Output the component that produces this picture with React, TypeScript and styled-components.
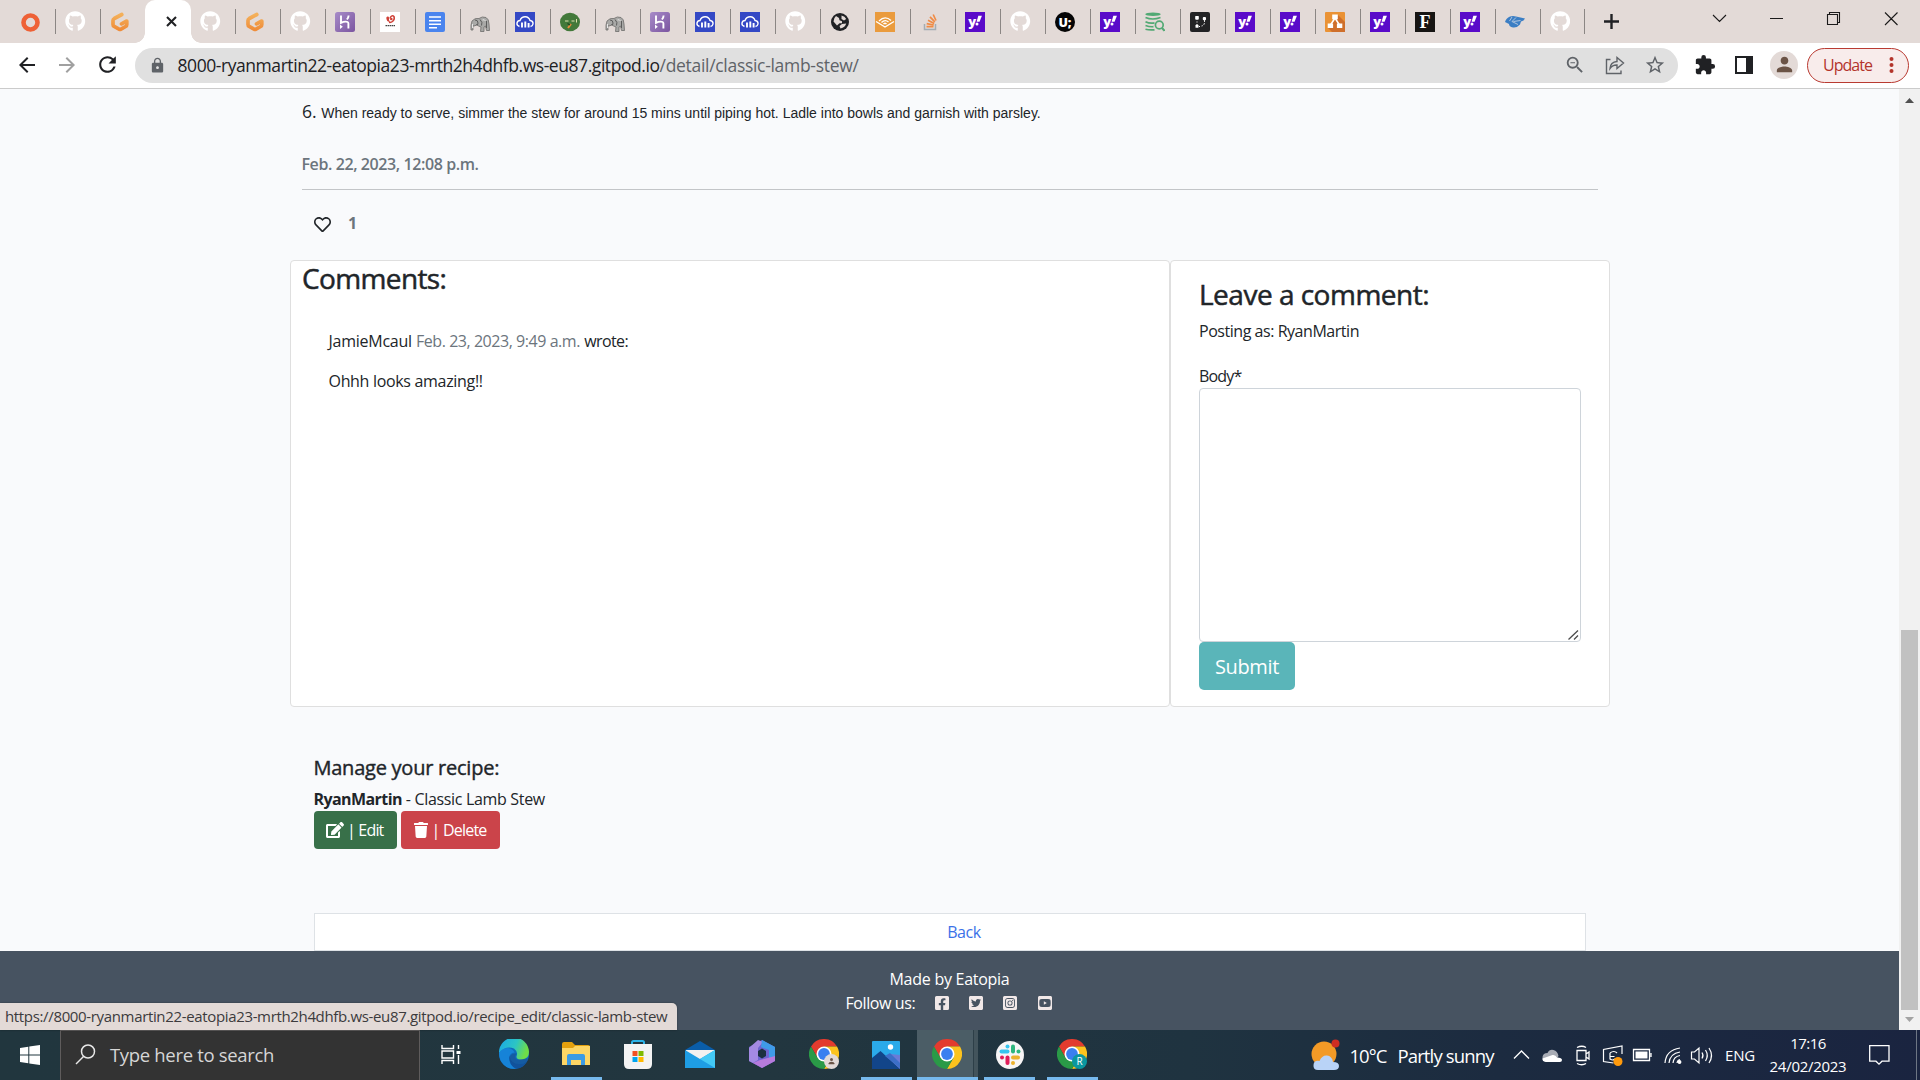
import React from "react";
import styled, { createGlobalStyle, css } from "styled-components";
import { FaGithub, FaRegHeart, FaEdit, FaTrash, FaFacebookSquare, FaTwitterSquare, FaInstagramSquare, FaYoutubeSquare } from "react-icons/fa";
import { MdExtension, MdStarBorder, MdPerson, MdLock, MdRefresh, MdArrowBack, MdArrowForward, MdZoomOut } from "react-icons/md";

/* Letter spacing per label, in px */
const tracking = {
  host: -0.438,
  path: -0.302,
  update: -0.97,
  date: -0.41,
  comments: -0.62,
  author: -0.25,
  when: -0.45,
  wrote: -0.6,
  ohhh: -0.32,
  leave: -0.5,
  posting: -0.46,
  body: -0.8,
  submit: -0.36,
  manage: -0.24,
  ryan: -0.58,
  stew: -0.32,
  edit: -0.811,
  del: -0.781,
  back: -0.4,
  made: -0.267,
  follow: -0.4,
  status: -0.345,
  search: -0.328,
  temp: -0.96,
  sunny: -0.84,
  eng: -0.178,
  time: -0.5,
  day: -0.28,
};

const Global = createGlobalStyle`
  * { box-sizing: border-box; }
  body { margin: 0; overflow: hidden; font-family: "Open Sans", "Noto Sans", sans-serif; color: #212529; }
  svg { display: block; flex: none; }
`;

const Screen = styled.div`
  width: 1920px;
  height: 1080px;
  display: flex;
  flex-direction: column;
  overflow: hidden;
`;
const Text = styled.span<{ $ls?: number }>`
  letter-spacing: ${(p) => p.$ls ?? 0}px;
  white-space: pre;
`;

/* Browser chrome */
const TabStrip = styled.div`
  height: 43px;
  flex: none;
  display: flex;
  background: #e3dad7;
  padding-left: 11px;
`;
const Tab = styled.div<{ $line?: boolean; $w?: number }>`
  width: ${(p) => p.$w ?? 45}px;
  height: 43px;
  flex: none;
  display: flex;
  align-items: center;
  justify-content: space-between;
  padding-left: 9px;
  &::after {
    content: "";
    width: 1px;
    height: 25px;
    background: ${(p) => (p.$line === false ? "transparent" : "#8b8684")};
  }
`;
const ActiveTab = styled.div`
  width: 46px;
  margin-left: -1px;
  flex: none;
  display: flex;
  align-items: center;
  justify-content: center;
  padding-left: 7px;
  position: relative;
  background: #fff;
  border-radius: 10px 10px 0 0;
  &::before, &::after {
    content: "";
    position: absolute;
    bottom: 0;
    width: 10px;
    height: 10px;
  }
  &::before { left: -10px; background: radial-gradient(circle at 0 0, transparent 9.5px, #fff 10px); }
  &::after { right: -10px; background: radial-gradient(circle at 100% 0, transparent 9.5px, #fff 10px); }
`;
const NewTab = styled.div`
  display: flex;
  align-items: center;
  margin-left: 19px;
`;
const WindowButtons = styled.div`
  margin-left: auto;
  padding: 9px 21px 0 0;
`;
const Toolbar = styled.div`
  height: 46px;
  flex: none;
  display: flex;
  align-items: center;
  background: #fff;
  border-bottom: 1px solid #cbcbcb;
  padding: 0 10px 2px 15px;
  color: #202124;
`;
const NavButtons = styled.div`
  display: flex;
  width: 120px;
  gap: 16px;
  align-items: center;
`;
const Omnibox = styled.div`
  width: 1543px;
  height: 35px;
  margin-top: 1px;
  border-radius: 18px;
  background: #e0e0e0;
  display: flex;
  align-items: center;
  padding: 0 12px 0 14px;
  font-size: 17.5px;
  line-height: 32px;
  color: #202124;
`;
const Path = styled(Text)` color: #5f6368; `;
const Lock = styled.div` color: #5f6368; width: 28.5px; `;
const OmniIcons = styled.div`
  margin-left: auto;
  display: flex;
  gap: 18px;
  align-items: center;
  color: #5f6368;
`;
const Extensions = styled.div`
  display: flex;
  align-items: center;
  margin-left: 16px;
`;
const SidePanel = styled.div` margin: 0 17px 0 19px; `;
const Avatar = styled.div`
  width: 28px;
  height: 28px;
  margin-right: 9px;
  border-radius: 50%;
  background: #e3dad7;
  color: #6b5446;
  display: flex;
  align-items: center;
  justify-content: center;
`;
const Update = styled.div`
  width: 102px;
  height: 35px;
  margin-top: 1px;
  border: 1.5px solid #b93a31;
  border-radius: 18px;
  background: #f8eceb;
  color: #b3342b;
  display: flex;
  align-items: center;
  justify-content: space-between;
  padding: 0 14px 1px 15px;
  font-size: 16px;
`;

/* Web page */
const Viewport = styled.div`
  height: 941px;
  flex: none;
  display: flex;
  position: relative;
`;
const Page = styled.main`
  width: 1899px;
  background: #f9fafc;
  display: flex;
  flex-direction: column;
  font-size: 16px;
  line-height: 24px;
`;
const Scrollbar = styled.div`
  width: 21px;
  background: #f1f1f1;
  display: flex;
  flex-direction: column;
  align-items: center;
  justify-content: space-between;
  padding: 9px 0 8px;
`;
const Thumb = styled.div`
  width: 17px;
  height: 380px;
  background: #c1c1c1;
  margin: 525px 0 5px;
`;
const Recipe = styled.section`
  width: 1296px;
  margin: 9px 0 0 302px;
`;
const Step = styled.div`
  height: 26px;
  line-height: 26px;
  font-size: 17.6px;
`;
const StepText = styled(Text)`
  font: 14px/26px "Liberation Sans", Arial, sans-serif;
  margin-left: 4.5px;
`;
const Posted = styled.div`
  margin-top: 28px;
  height: 38px;
  border-bottom: 1px solid #c3c5c8;
  color: #6c757d;
  font-weight: 600;
  line-height: 25px;
  text-indent: -0.5px;
`;
const Like = styled.div`
  margin: 21px 0 25px 12px;
  height: 24px;
  display: flex;
  align-items: center;
  gap: 17px;
  color: #6c757d;
  font-weight: 700;
  svg { color: #212529; margin-top: 3px; }
`;
const CardRow = styled.section`
  display: flex;
  margin-left: 290px;
  height: 447px;
`;
const Card = styled.div<{ $w: number; $pad: string }>`
  width: ${(p) => p.$w}px;
  background: #fff;
  border: 1px solid #dfdfdf;
  border-radius: 4px;
  padding: ${(p) => p.$pad};
`;
const Heading = styled.h3`
  margin: 0;
  font-size: 28px;
  line-height: 34px;
  font-weight: 400;
  -webkit-text-stroke: 0.5px #212529;
`;
const Comment = styled.article`
  margin: 34px 0 0 26.5px;
`;
const Muted = styled(Text)` color: #6c757d; `;
const Para = styled.p<{ $top?: number }>`
  margin: ${(p) => p.$top ?? 0}px 0 0;
  height: 24px;
`;
const Field = styled.div`
  position: relative;
  width: 382px;
  height: 254px;
  > svg { position: absolute; right: 2px; bottom: 2px; }
`;
const TextArea = styled.textarea`
  display: block;
  width: 382px;
  height: 254px;
  border: 1px solid #ced4da;
  border-radius: 4px;
  background: #fff;
  resize: none;
`;
const Submit = styled.button`
  width: 96px;
  height: 48px;
  padding: 0;
  border: 0;
  border-radius: 5px;
  background: #5ab5b9;
  color: #fff;
  font: 20px "Open Sans", sans-serif;
`;
const Manage = styled.section`
  margin: 49px 0 0 313.5px;
`;
const ManageTitle = styled.h5`
  margin: 0 0 7px;
  font-size: 20px;
  line-height: 24px;
  font-weight: 400;
  -webkit-text-stroke: 0.4px #212529;
`;
const Buttons = styled.div`
  display: flex;
  gap: 4px;
  margin-left: 0.5px;
`;
const Action = styled.button<{ $bg: string; $w: number; $gap: number }>`
  width: ${(p) => p.$w}px;
  height: 38px;
  padding: 0 0 0 12px;
  border: 0;
  border-radius: 4px;
  background: ${(p) => p.$bg};
  color: #fff;
  display: flex;
  align-items: center;
  gap: ${(p) => p.$gap}px;
  font: 16px/24px "Open Sans", sans-serif;
`;
const Back = styled.div`
  width: 1272px;
  height: 38px;
  margin: 64px 0 0 314px;
  border: 1px solid #dee2e6;
  background: #fff;
  padding-left: 28px;
  line-height: 37px;
  text-align: center;
  color: #3b71e8;
`;
const Footer = styled.footer`
  flex: 1;
  background: #475361;
  color: #fff;
  padding-top: 16px;
  display: flex;
  flex-direction: column;
  align-items: center;
`;
const Social = styled.div`
  display: flex;
  align-items: center;
  height: 24px;
  width: 209px;
  margin-left: 1px;
  gap: 18.4px;
  svg { color: #f1e8e8; }
`;
const StatusBubble = styled.div`
  position: absolute;
  left: 0;
  bottom: 0;
  width: 677px;
  height: 27px;
  background: #e3dad7;
  border-top-right-radius: 5px;
  padding-left: 5px;
  font-size: 15px;
  line-height: 26px;
  color: #3c3b3d;
  box-shadow: 0 0 2px rgba(0, 0, 0, 0.4);
`;

/* Taskbar */
const Taskbar = styled.div`
  height: 50px;
  display: flex;
  background: linear-gradient(90deg, #21363e 0%, #22363f 40%, #1f3340 62%, #1c2b40 78%, #1a2440 100%);
  color: #fff;
`;
const Start = styled.div`
  width: 60px;
  display: flex;
  align-items: center;
  justify-content: center;
`;
const SearchBox = styled.div`
  width: 360px;
  background: #333;
  border: 1px solid #5f5c5c;
  border-bottom: 0;
  display: flex;
  align-items: center;
  gap: 14px;
  padding: 0 0 2px 14px;
  font-size: 18.5px;
  color: #d6d6d6;
`;
const TaskIcon = styled.div<{ $mode?: "open" | "active"; $w?: number }>`
  width: ${(p) => p.$w ?? 62}px;
  flex: none;
  display: flex;
  flex-direction: column;
  align-items: center;
  justify-content: space-between;
  padding-top: 9px;
  ${(p) => p.$mode === "active" && css`background: linear-gradient(90deg, #4b5d66 56px, #2d3f48 56px, #2d3f48 57px, #43545c 57px);`}
  &::after {
    content: "";
    height: 3px;
    width: ${(p) => (p.$mode === "active" ? "100%" : "51px")};
    background: ${(p) => (p.$mode ? "#76b9ed" : "transparent")};
  }
`;
const IconShift = styled.div<{ $x: number }>` padding-right: ${(p) => p.$x}px; `;
const Tray = styled.div`
  margin-left: auto;
  display: flex;
  align-items: center;
  width: 609px;
  font-size: 15px;
`;
const Weather = styled.div`
  display: flex;
  align-items: center;
  font-size: 18.5px;
  width: 201px;
`;
const Temp = styled(Text)` margin: 0 11px 0 8.5px; `;
const TrayIcons = styled.div`
  display: flex;
  align-items: center;
  width: 213px;
`;
const Lang = styled(Text)` width: 38px; `;
const Clock = styled.div`
  width: 90px;
  display: flex;
  flex-direction: column;
  align-items: center;
  line-height: 23.5px;
`;
const Notify = styled.div`
  margin-left: 16px;
  width: 47px;
`;
const ShowDesktop = styled.div`
  width: 1px;
  height: 50px;
  background: #6d7684;
`;

type LetterProps = { bg: string; round?: boolean; size: number; family: string; y: number; children: string };
const Letter = ({ bg, round, size, family, y, children }: LetterProps) => (
  <svg width="20" height="20">
    {round ? <circle cx="10" cy="10" r="10" fill={bg} /> : <rect width="20" height="20" fill={bg} />}
    <text x="10" y={y} fill="#fff" textAnchor="middle" fontSize={size} fontWeight="800" fontFamily={family}>{children}</text>
  </svg>
);
const Origin = () => <svg width="20" height="20"><circle cx="10.5" cy="10.5" r="7" fill="none" stroke="#ee6136" strokeWidth="4.6" /></svg>;
const Github = () => <FaGithub size={20.5} color="#fff" />;
const Gitpod = () => (
  <svg width="20" height="20">
    <defs><linearGradient id="gp" x1="0" y1="0" x2="0" y2="1"><stop offset="0" stopColor="#f4b05a" /><stop offset="1" stopColor="#ef8d3a" /></linearGradient></defs>
    <path d="M11.8 2.500L4.300 6.500Q3 7.300 3 8.600v3.800q0 1.300 1.200 2L9 17.200q1 .6 2 0l4.600-2.700q1.200-.7 1.200-2V9l-5.300 2.800" fill="none" stroke="url(#gp)" strokeWidth="3.700" strokeLinecap="round" strokeLinejoin="round" />
  </svg>
);
const Heroku = () => (
  <svg width="20" height="20">
    <defs><linearGradient id="hk" x1="0" y1="0" x2="1" y2="1"><stop offset="0" stopColor="#a78bc8" /><stop offset="1" stopColor="#7b55a0" /></linearGradient></defs>
    <rect width="20" height="20" rx="2.5" fill="url(#hk)" />
    <path d="M6 3.500v7.300c2.500-1.200 7.400-2 7.400.6v5.200M13.600 3.500c0 1.600-.7 2.800-1.700 4" fill="none" stroke="#fff" strokeWidth="1.900" />
    <path d="M5 12.500l2.800 2.200L5 17z" fill="#fff" />
  </svg>
);
const Recipes = () => (
  <svg width="20" height="20">
    <rect width="20" height="20" fill="#fff" />
    <path d="M6.300 6q0-2 2-1.500l1.200 1.700q-1.500 2 .8 3.300-3.600 1-4-3.500z" fill="#cf4036" />
    <path d="M10 6q2-3.500 4-1.500 1 3-1.500 5-1.500 1.200-3.500.8" fill="none" stroke="#cf4036" strokeWidth="1.500" />
    <circle cx="11.300" cy="7" r="1.300" fill="#cf4036" />
    <path d="M5.500 13.600h9.500" stroke="#444" strokeWidth="1.300" strokeDasharray="1.500 .5" />
  </svg>
);
const Docs = () => <svg width="20" height="20"><rect width="20" height="20" rx="2" fill="#4a84ee" /><path d="M4 5h12M4 8.700h12M4 12.300h12M4 15.800h8" stroke="#fff" strokeWidth="1.600" /></svg>;
const Elephant = () => (
  <svg width="20" height="20">
    <path d="M1 18Q.5 13 2 9Q5 5.500 9 6.500Q12 4 16 5.500Q19 7 19 12L19.500 18.500H16.500L15.500 14L14 15V19.500H10.500L11 15Q8 14 6.500 12.500Q5 15 3.500 13.500Q2.500 15 3 18z" fill="#a9a9a7" stroke="#6d6c6b" strokeWidth=".8" />
    <path d="M5 8q3 0 3 3t-2 2M10 7.500q3 3 1.500 6M16.500 9v7" fill="none" stroke="#5c5c5c" strokeWidth="1" />
    <path d="M12.500 8q2-1 3 1M2.500 12v4" stroke="#e6e6e6" fill="none" />
  </svg>
);
const Cloudinary = () => (
  <svg width="20" height="20"><rect width="20" height="20" fill="#3448c5" /><path d="M4.500 14.500Q1.500 13.500 2 11Q2.500 8.600 5 8.500Q6.500 4.700 10.300 4.800Q14 5 15 8.500Q18.300 9 18 12Q17.700 14 15.500 14.500" fill="none" stroke="#fff" strokeWidth="1.400" /><path d="M7 10.500v5M10.300 9.500v6M13.600 11v4.500" stroke="#fff" strokeWidth="1.900" /></svg>
);
const Green = () => <svg width="20" height="20"><ellipse cx="10" cy="10" rx="10" ry="9.300" fill="#43793a" /><path d="M5 9h3.500M11.500 9h3M16.500 7v3.500" stroke="#dfe3b0" strokeWidth="1" /><path d="M11 12l-3 4" stroke="#e88a3c" strokeWidth="2" /><path d="M7.500 11.500l2.500 1.500" stroke="#1d4420" strokeWidth="1.300" /></svg>;
const Globe = () => <svg width="20" height="20"><circle cx="10" cy="10" r="9" fill="#202124" /><path d="M3.500 9.500Q3.500 6 6 4l3 2 .5 2.200 2.500 1v2H9.500L7 13.500 3.500 9.500zM11.500 3.500q3.500.7 4.700 3.500l-2.200 1.500-2.500-1.500zM10.500 16.500l-1-2.500 2.500-2 4.200-.5q-1 4-5.700 5z" fill="#e3dad7" /></svg>;
const Audible = () => <svg width="20" height="20"><rect width="20" height="20" fill="#ea9b3d" /><path d="M1 9.500l9 5.500 9-5.500M4 9q6-6 12-.5M6.500 10.500Q10 7 13.500 10M8.500 12q1.500-1.500 3 0" fill="none" stroke="#fff" strokeWidth="1.400" /></svg>;
const Stack = () => <svg width="20" height="20" fill="none"><path d="M4.500 12v5.500h11V12" stroke="#a4adb3" strokeWidth="1.500" /><path d="M6.500 14.700h7M6.700 11.700l7 1.300M8 8.200l6.200 3.200M10 4.800l4.800 5M13.200 2.500l2.800 6" stroke="#f08b45" strokeWidth="1.700" /></svg>;
const Sql = () => <svg width="20" height="20" fill="none" stroke="#52a974"><ellipse cx="8" cy="2.300" rx="7.700" ry="1.700" fill="#52a974" stroke="none" /><path d="M.5 5.500q7 3 15 0M.5 9.700q4 2 9 1.200M.5 13.500q4 1.500 8 1.200M.5 17.300q4 1 9 .5" strokeWidth="1.700" /><circle cx="14.300" cy="13" r="3.900" strokeWidth="1.700" /><path d="M17 16l2.500 2.800" strokeWidth="2" /></svg>;
const Flow = () => (
  <svg width="20" height="20">
    <rect width="20" height="20" rx="2" fill="#232325" />
    <path d="M7 7v7M9 14.500h2" stroke="#fff" strokeDasharray="1 1.500" />
    <path d="M14.500 8v2q0 3.500-3 4" fill="none" stroke="#ddd" strokeDasharray="2 1" />
    <rect x="5.200" y="4" width="3.600" height="3.600" rx=".6" fill="#fff" /><rect x="5.500" y="12.800" width="3" height="3" rx=".6" fill="#fff" /><rect x="12.800" y="5" width="3.200" height="3.200" rx="1" fill="#fff" />
  </svg>
);
const Drawio = () => <svg width="20" height="20"><rect width="20" height="20" rx="1" fill="#ea9235" /><path d="M13 3l7 7v10H7l-4-4 7-8z" fill="#cf6f2b" /><path d="M10 6L5.500 13M10 6l4.500 7" stroke="#fff" strokeWidth="1.500" /><path d="M7.200 2.500h5.600V7.300H7.200z" fill="#fff" /><path d="M2.700 11.500h5.400V16H2.700z" fill="#fff" /><path d="M11.900 11.500h5.400V16h-5.400z" fill="#fff" /></svg>;
const Planet = () => <svg width="20" height="20"><path d="M0 10Q1 6 5 4.500Q8 3.500 11 4.500L20 6.500L18.500 8.500L16 9.500L15 12.500Q12 16 8 15.500Q4 14.500 4 12z" fill="#3b7ec4" /><path d="M7 5L4.500 9M11 5.500L7 9.500l6 3M8.500 9.500l7-1" stroke="#dfe3ea" strokeWidth=".7" fill="none" /></svg>;
const Yahoo = () => (
  <svg width="20" height="20"><rect width="20" height="20" fill="#5a0bc9" /><text x="7.300" y="13.600" fill="#fff" textAnchor="middle" fontSize="13" fontWeight="800" fontFamily="Open Sans">y</text><path d="M13.300 3.700h3.600l-2.300 6h-3z" fill="#fff" /><circle cx="12" cy="12" r="1.500" fill="#fff" /></svg>
);
const Uxd = () => <Letter bg="#050505" round size={12.500} y={14.500} family="Open Sans">U;</Letter>;
const Fandom = () => <Letter bg="#171513" size={18} y={15.700} family="Liberation Serif">F</Letter>;

const before = [Origin, Github, Gitpod];
const after = [Github, Gitpod, Github, Heroku, Recipes, Docs, Elephant, Cloudinary, Green, Elephant, Heroku, Cloudinary, Cloudinary, Github, Globe, Audible, Stack, Yahoo, Github, Uxd, Yahoo, Sql, Flow, Yahoo, Yahoo, Drawio, Yahoo, Fandom, Yahoo, Planet, Github];

const Chrome = ({ badge }: { badge?: "person" | "R" }) => (
  <svg width="30" height="30" viewBox="0 0 30 30">
    <path d="M2 7.500A15 15 0 0 1 28 7.500H15L8.500 18.700z" fill="#e33b2e" />
    <path d="M28 7.500A15 15 0 0 1 15 30L21.500 18.700 15 7.500z" fill="#fcc31e" />
    <path d="M2 7.500A15 15 0 0 0 15 30L21.500 18.700H8.500z" fill="#2a9a47" />
    <circle cx="15" cy="15" r="7.500" fill="#fff" /><circle cx="15" cy="15" r="5.900" fill="#3a7ff0" />
    {badge === "person" && <g><circle cx="22.500" cy="22.500" r="7.500" fill="#e3dad7" /><circle cx="22.500" cy="20.500" r="1.500" fill="#6b5446" /><path d="M19.700 25.300v-1q0-1.500 2.800-1.500t2.800 1.500v1z" fill="#6b5446" /></g>}
    {badge === "R" && <g><circle cx="22.500" cy="22.500" r="7.500" fill="#0b97a0" /><text x="22.500" y="26.300" fontSize="10" fill="#fff" textAnchor="middle" fontFamily="Open Sans">R</text></g>}
  </svg>
);

export default function App() {
  return (
    <Screen>
      <Global />
      <TabStrip>
        {before.map((Icon, i) => <Tab key={i} $line={i < 2}><Icon /></Tab>)}
        <ActiveTab><svg width="11" height="11"><path d="M1 1l9 9M10 1l-9 9" stroke="#202124" strokeWidth="2.100" /></svg></ActiveTab>
        {after.map((Icon, i) => <Tab key={i} $w={i > 28 ? 44.5 : 45}><Icon /></Tab>)}
        <NewTab><svg width="15" height="15"><path d="M0 7.500h15M7.500 0v15" stroke="#202124" strokeWidth="2.400" /></svg></NewTab>
        <WindowButtons>
          <svg width="188" height="20" fill="none" stroke="#1b1a1a" strokeWidth="1.100">
            <path d="M2 6l6.500 6.500L15 6M59 9.500h13M116.500 5.500h10v10h-10zM118.500 5.500v-2h10v10h-2M174 3.500l12.500 12.500M186.500 3.500L174 16" />
          </svg>
        </WindowButtons>
      </TabStrip>
      <Toolbar>
        <NavButtons>
          <MdArrowBack size={24} /><MdArrowForward size={24} color="#a0a0a0" /><MdRefresh size={25} />
        </NavButtons>
        <Omnibox>
          <Lock><MdLock size={17} /></Lock>
          <Text $ls={tracking.host}>8000-ryanmartin22-eatopia23-mrth2h4dhfb.ws-eu87.gitpod.io</Text>
          <Path $ls={tracking.path}>/detail/classic-lamb-stew/</Path>
          <OmniIcons>
            <MdZoomOut size={22} />
            <svg width="22" height="22" viewBox="0 0 22 22" fill="none" stroke="#5f6368" strokeWidth="1.400"><path d="M6.500 5.500H2.500v14h14.500v-3M6 14.500q.5-6.500 7-7V3.500l6.500 5.500-6.500 5.500V11q-4.500-.2-7 3.500z" /></svg>
            <MdStarBorder size={22} />
          </OmniIcons>
        </Omnibox>
        <Extensions>
          <MdExtension size={22} />
          <SidePanel><svg width="18" height="18"><path d="M0 0h18v18H0zM2 2v14h9V2z" fill="#202124" fillRule="evenodd" /></svg></SidePanel>
          <Avatar><MdPerson size={23} /></Avatar>
          <Update>
            <Text $ls={tracking.update}>Update</Text>
            <svg width="5" height="18" fill="#b3342b"><circle cx="2.500" cy="3" r="2" /><circle cx="2.500" cy="9" r="2" /><circle cx="2.500" cy="15" r="2" /></svg>
          </Update>
        </Extensions>
      </Toolbar>

      <Viewport>
        <Page>
          <Recipe>
            <Step>6.<StepText>When ready to serve, simmer the stew for around 15 mins until piping hot. Ladle into bowls and garnish with parsley.</StepText></Step>
            <Posted><Text $ls={tracking.date}>Feb. 22, 2023, 12:08 p.m.</Text></Posted>
            <Like><FaRegHeart size={17} />1</Like>
          </Recipe>
          <CardRow>
            <Card $w={880} $pad="0 0 0 11px">
              <Heading><Text $ls={tracking.comments}>Comments:</Text></Heading>
              <Comment>
                <Para><Text $ls={tracking.author}>JamieMcaul</Text> <Muted $ls={tracking.when}>Feb. 23, 2023, 9:49 a.m.</Muted> <Text $ls={tracking.wrote}>wrote:</Text></Para>
                <Para $top={16}><Text $ls={tracking.ohhh}>Ohhh looks amazing!!</Text></Para>
              </Comment>
            </Card>
            <Card $w={440} $pad="16px 0 0 28px">
              <Heading><Text $ls={tracking.leave}>Leave a comment:</Text></Heading>
              <Para $top={8}><Text $ls={tracking.posting}>Posting as: RyanMartin</Text></Para>
              <Para $top={21}><Text $ls={tracking.body}>Body*</Text></Para>
              <Field>
                <TextArea />
                <svg width="11" height="10"><path d="M.5 9.500L10 .5M6 9.500L10 5.500" stroke="#4c4c4c" strokeWidth="1.300" /></svg>
              </Field>
              <Submit><Text $ls={tracking.submit}>Submit</Text></Submit>
            </Card>
          </CardRow>
          <Manage>
            <ManageTitle><Text $ls={tracking.manage}>Manage your recipe:</Text></ManageTitle>
            <Para><Text as="strong" $ls={tracking.ryan}>RyanMartin</Text><Text $ls={tracking.stew}> - Classic Lamb Stew</Text></Para>
            <Buttons>
              <Action $bg="#387049" $w={83} $gap={3}><FaEdit size={18} /><Text $ls={tracking.edit}>| Edit</Text></Action>
              <Action $bg="#cb444a" $w={99} $gap={2.500}><FaTrash size={16} /><Text $ls={tracking.del}>| Delete</Text></Action>
            </Buttons>
          </Manage>
          <Back><Text $ls={tracking.back}>Back</Text></Back>
          <Footer>
            <Text $ls={tracking.made}>Made by Eatopia</Text>
            <Social>
              <Text $ls={tracking.follow}>Follow us:</Text>
              <FaFacebookSquare size={16} /><FaTwitterSquare size={16} /><FaInstagramSquare size={16} /><FaYoutubeSquare size={16} />
            </Social>
          </Footer>
        </Page>
        <Scrollbar>
          <svg width="9" height="5"><path d="M0 5l4.500-5L9 5z" fill="#505050" /></svg>
          <Thumb />
          <svg width="9" height="5"><path d="M0 0h9L4.500 5z" fill="#a3a3a3" /></svg>
        </Scrollbar>
        <StatusBubble><Text $ls={tracking.status}>https://8000-ryanmartin22-eatopia23-mrth2h4dhfb.ws-eu87.gitpod.io/recipe_edit/classic-lamb-stew</Text></StatusBubble>
      </Viewport>

      <Taskbar>
        <Start><svg width="20" height="20" fill="#fff"><path d="M0 3l8.300-1.200v7.700H0zM9.300 1.600L20 0v9.500H9.300zM0 10.500h8.300v7.700L0 17zM9.300 10.500H20V20L9.300 18.400z" /></svg></Start>
        <SearchBox>
          <svg width="21" height="21" fill="none" stroke="#e8e8e8" strokeWidth="1.500"><circle cx="13" cy="7.500" r="6.500" /><path d="M8.500 12.500L1 20" /></svg>
          <Text $ls={tracking.search}>Type here to search</Text>
        </SearchBox>
        <TaskIcon $w={63}>
          <IconShift $x={2}><svg width="20" height="30" fill="none" stroke="#fff" strokeWidth="1.400"><path d="M1 6v3.500h11.500V6M1 25v-3.500h11.500V25M1 12h11.500v7H1zM17.500 6v4M17.500 16v9" /><path d="M15.500 12h4v3h-4z" fill="#fff" stroke="none" /></svg></IconShift>
        </TaskIcon>
        <TaskIcon>
          <svg width="30" height="30">
            <defs><linearGradient id="ed" x1="0" y1="0" x2="1" y2=".3"><stop offset="0" stopColor="#1aa7e8" /><stop offset=".6" stopColor="#2cc5c4" /><stop offset="1" stopColor="#6fdd48" /></linearGradient></defs>
            <circle cx="15" cy="15" r="15" fill="#0f6cbd" />
            <path d="M0 14A15 15 0 0 1 30 13Q30 20 23 20.500Q17 20.500 17.500 17.500Q19.500 13 15 9.500Q7 6 0 14z" fill="url(#ed)" />
            <path d="M0 14Q3 9 9 9Q14 9.500 15.500 13.500Q10 14 10 20Q11 27 18 29.500Q10 31 5 26Q0 21 0 14z" fill="#1683d8" />
            <path d="M10.500 17Q12 25 20 25Q25 25 28 22.500Q24 29.500 17 29.800Q9.500 26 10.500 17z" fill="#11529c" />
            <path d="M28 22.500Q31 19 27 19.500Q22 21 17.500 20.500Q15 18 17.500 14.500Q11 14 10.700 19Q13 25.500 20 25Q25 25 28 22.500z" fill="#1b4f8c" opacity=".55" />
          </svg>
        </TaskIcon>
        <TaskIcon $mode="open">
          <svg width="28" height="30"><path d="M0 5q0-2 2-2h8l3 3h13q2 0 2 2v17H0z" fill="#e4a10e" /><path d="M0 9h11l2-2h15v19H0z" fill="#fdd665" /><path d="M5 26V17q0-2 2-2h14q2 0 2 2v9h-4v-5H9v5z" fill="#3c9be4" /></svg>
        </TaskIcon>
        <TaskIcon>
          <svg width="28" height="30"><path d="M8 6V3.500q0-1.500 1.500-1.500h9q1.500 0 1.500 1.500V6" fill="none" stroke="#2cb3e8" strokeWidth="2" /><path d="M0 5h28v20q0 5-5 5H5q-5 0-5-5z" fill="#f3f3f3" /><path d="M8.500 12h5v5h-5z" fill="#f25022" /><path d="M14.500 12h5v5h-5z" fill="#7fba00" /><path d="M8.500 18h5v5h-5z" fill="#00a4ef" /><path d="M14.500 18h5v5h-5z" fill="#ffb900" /></svg>
        </TaskIcon>
        <TaskIcon>
          <svg width="30" height="30"><path d="M0 11L15 2l15 9z" fill="#0a5da8" /><path d="M1 11h28v9H1z" fill="#f3f1f0" /><path d="M0 11l15 9L30 11v18H0z" fill="#1e9de4" /><path d="M15 20l15-9v18z" fill="#43c9f5" /><path d="M3 11h24l-12 8z" fill="#f3f1f0" /></svg>
        </TaskIcon>
        <TaskIcon>
          <svg width="26" height="30"><path d="M13 1L26 8v14l-13 7L0 22V8z" fill="#6d64cf" /><path d="M0 9l9-8 5 2-5 6v12l-5 3-4-2z" fill="#a48ae3" /><path d="M13 1l13 7v14l-6-1V11l-8-3z" fill="#3f9be8" /><path d="M26 17v5l-13 7-9-5 7-3 4-1z" fill="#b77bdc" /><path d="M13 9.500l4 2.500v5l-4 2.500-4-2.500v-5z" fill="#1b3040" /></svg>
        </TaskIcon>
        <TaskIcon><Chrome badge="person" /></TaskIcon>
        <TaskIcon $mode="open">
          <svg width="28" height="30"><rect y="2" width="28" height="28" rx="1" fill="#2baaea" /><path d="M28 16v14H12l6-15z" fill="#6a7bd6" /><path d="M0 19L8.500 12 28 30H0z" fill="#124589" /><path d="M13 17l5-3 10 10v5z" fill="#3c6fc8" /><circle cx="18.500" cy="8" r="2.700" fill="#fff" /></svg>
        </TaskIcon>
        <TaskIcon $mode="active" $w={61}><IconShift $x={1}><Chrome /></IconShift></TaskIcon>
        <TaskIcon $mode="open" $w={63}>
          <svg width="28" height="30"><circle cx="14" cy="16" r="14" fill="#f7f5f6" /><g strokeWidth="4" strokeLinecap="round"><path d="M5.500 12.500h6" stroke="#36c5f0" /><path d="M17 7.500v5" stroke="#2eb67d" /><path d="M17 18.500h5" stroke="#ecb22e" /><path d="M11.500 18.500v5.500" stroke="#e01e5a" /><path d="M11.500 7.500h.01" stroke="#36c5f0" /><path d="M22.500 12.500h.01" stroke="#2eb67d" /><path d="M17 24h.01" stroke="#ecb22e" /><path d="M6 18.500h.01" stroke="#e01e5a" /></g></svg>
        </TaskIcon>
        <TaskIcon $mode="open"><Chrome badge="R" /></TaskIcon>
        <Tray>
          <Weather>
            <svg width="30" height="32"><circle cx="13" cy="15" r="12.500" fill="#f39a26" /><circle cx="24.500" cy="4.500" r="4" fill="#cf2d22" /><path d="M7 31q-5 0-4.500-5t6-4Q11 16 16 16.500t6 6.500q6 0 6 4t-5 4z" fill="#b9d3f7" /></svg>
            <Temp $ls={tracking.temp}>10°C</Temp>
            <Text $ls={tracking.sunny}>Partly sunny</Text>
          </Weather>
          <TrayIcons>
            <svg width="205" height="24" fill="none" stroke="#fff" strokeWidth="1.300">
              <path d="M2 15.500L9.500 8 17 15.500" />
              <path d="M34 19q-4-1-3.500-5t5-4q2-4 6-3t5 6l-4 6z" fill="#a8acb5" stroke="none" /><path d="M34 19q-4-.5-3.500-3.500l10-3.500q3-.5 4.500 2.500 5 0 5 2.500t-3 2z" fill="#fff" stroke="none" />
              <path d="M65 7.500h9v10h-9zM74 11l3-2v7l-3-2M65 4.500q5-2.500 9 0M65 20.500q5 2.500 9 0" />
              <path d="M110 11V3L91.500 6.500v12l10 1.500M98 10q4-3 7 0M97.500 13.500h5M98 10v6q3 2 5 0" strokeWidth="1.200" /><circle cx="106" cy="18.500" r="4.500" fill="#ff9a0c" stroke="none" />
              <path d="M121.500 6.500h16v11h-16zM139 10v4" /><path d="M123.500 8.500h12v7h-12z" fill="#fff" stroke="none" />
              <path d="M153 20Q154 7 168 5M157 20Q158 10.500 168 9M161 20q.5-6.500 7-7.500M165 20q.5-3 3-3.500" strokeWidth="1.200" /><circle cx="167.500" cy="19" r="1.300" fill="#fff" />
              <path d="M179.500 9h3l4.500-4v15l-4.500-4h-3zM190 9.500q2 3 0 6M193.500 7q3.500 5.500 0 11M197 5q5 7.500 0 15" strokeWidth="1.200" />
            </svg>
          </TrayIcons>
          <Lang $ls={tracking.eng}>ENG</Lang>
          <Clock><Text $ls={tracking.time}>17:16</Text><Text $ls={tracking.day}>24/02/2023</Text></Clock>
          <Notify><svg width="21" height="22" fill="none" stroke="#fff" strokeWidth="1.300"><path d="M.7 1.700h19.300v15.500h-7l-3 3-3-3H.7z" /></svg></Notify>
          <ShowDesktop />
        </Tray>
      </Taskbar>
    </Screen>
  );
}
